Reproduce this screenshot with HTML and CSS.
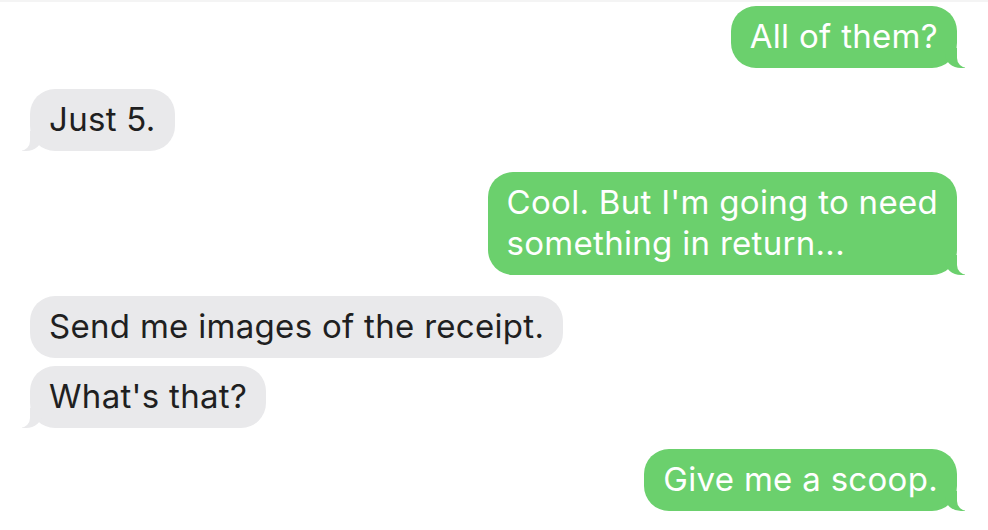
FILE: index.html
```html
<!DOCTYPE html>
<html lang="en">
<head>
  <meta charset="UTF-8">
  <title>Messages</title>
  <link rel="stylesheet" href="styles.css">
</head>
<body>
  <div class="chat">
    <div class="msg sent">All of them?</div>
    <div class="msg received">Just 5.</div>
    <div class="msg sent">Cool. But I'm going to need<br>something in return...</div>
    <div class="msg received no-tail">Send me images of the receipt.</div>
    <div class="msg received follow">What's that?</div>
    <div class="msg sent">Give me a scoop.</div>
  </div>
</body>
</html>
```

FILE: styles.css
```css
body {
  margin: 0;
  background: #fff;
  font-family: Inter, "Liberation Sans", sans-serif;
}
.chat {
  border-top: 2px solid #f4f4f4;
  padding: 4px 31px 0 30px;
  display: flex;
  flex-direction: column;
  gap: 21px;
}
.msg {
  position: relative;
  max-width: 540px;
  padding: 10px 19px 11px 19px;
  border-radius: 25px;
  font-size: 33px;
  line-height: 41px;
  letter-spacing: 0.3px;
}
.msg.follow {
  margin-top: -13px;
}
/* green bubbles on the right */
.sent {
  align-self: flex-end;
  background: #6bd06d;
  color: #fff;
}
.sent::before {
  content: "";
  position: absolute;
  z-index: 0;
  bottom: 0;
  right: -8px;
  width: 20px;
  height: 20px;
  background: #6bd06d;
  border-bottom-left-radius: 16px 14px;
}
.sent::after {
  content: "";
  position: absolute;
  z-index: 1;
  bottom: 0;
  right: -10px;
  width: 10px;
  height: 20px;
  background: #fff;
  border-bottom-left-radius: 10px;
}
/* grey bubbles on the left */
.received {
  align-self: flex-start;
  background: #e9e9eb;
  color: #1f1f21;
}
.received::before {
  content: "";
  position: absolute;
  z-index: 0;
  bottom: 0;
  left: -8px;
  width: 20px;
  height: 20px;
  background: #e9e9eb;
  border-bottom-right-radius: 16px 14px;
}
.received::after {
  content: "";
  position: absolute;
  z-index: 1;
  bottom: 0;
  left: -10px;
  width: 10px;
  height: 20px;
  background: #fff;
  border-bottom-right-radius: 10px;
}
.received.no-tail::before,
.received.no-tail::after {
  display: none;
}
```
